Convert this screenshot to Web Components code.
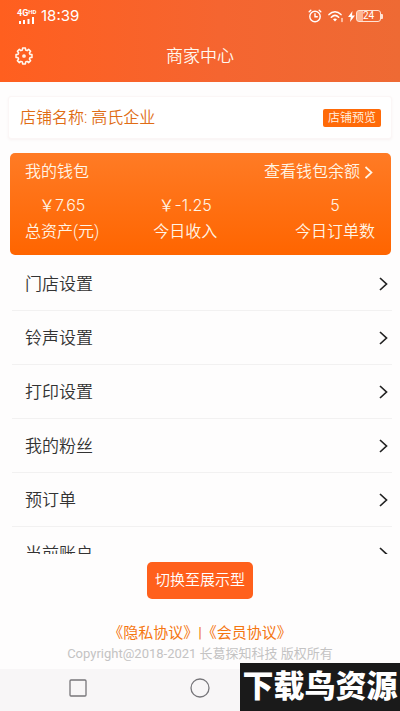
<!DOCTYPE html>
<html lang="zh-CN">
<head>
<meta charset="utf-8">
<meta name="viewport" content="width=device-width, initial-scale=1">
<title>商家中心</title>
<style>
html, body { height: 100%; }
body { margin: 0; background: #fefdfd; font-family: Roboto, "Noto Sans CJK SC", sans-serif; font-weight: 350; color: #333; }
</style>
</head>
<body>
<merchant-page></merchant-page>
<script>
const define = (name, html, setup) => customElements.define(name, class extends HTMLElement {
  constructor() {
    super();
    this.attachShadow({ mode: "open" }).innerHTML = html;
  }
  connectedCallback() { if (setup) setup(this, this.shadowRoot); }
});

define("status-bar", `
<style>
:host { display: flex; align-items: center; height: 32px; padding: 0 17px; color: #fff; }
.time { font-family: Inter, sans-serif; font-size: 15px; line-height: 20px; margin-left: 4px; flex: 1; font-weight: 400; }
.signal { display: flex; flex-direction: column; width: 20px; }
.net { font: 700 9px/8px Roboto, sans-serif; display: flex; }
.net small { font-size: 6px; line-height: 5px; }
.icons { display: flex; align-items: center; }
.wifi { margin-left: 6px; }
.bolt { margin-left: 4px; }
.battery { box-sizing: border-box; width: 25px; height: 12px; border: 1px solid #ffe3d5; border-radius: 3px; margin-left: 1px;
  font: 10px/10px Roboto, sans-serif; text-align: center; background: linear-gradient(90deg, #ffb593 24%, transparent 24%); }
.tip { width: 2px; height: 5px; background: #ffe3d5; border-radius: 0 1px 1px 0; }
</style>
<div class="signal"><span class="net">4G<small>HD</small></span>
<svg width="18" height="7" viewBox="0 0 18 7" fill="#fff"><path d="M2 4h2v3H2zM6 3h2v4H6zM10.500 2h2v5h-2zM15 0h2v7h-2z"/></svg></div>
<span class="time">18:39</span>
<div class="icons">
<svg width="14" height="14" viewBox="0 0 14 14" fill="none" stroke="#fff" stroke-width="1.400" stroke-linecap="round"><circle cx="7" cy="7.500" r="5.200"/><path d="M7 4.800v3h2.300M1.200 2.800l1.600-1.500M12.800 2.800l-1.600-1.500"/></svg>
<svg class="wifi" width="16" height="13" viewBox="0 0 16 13" fill="none" stroke="#fff" stroke-width="1.500" stroke-linecap="round"><path d="M1 4.600C4.500.900 9.500.900 13 4.600M3.300 7.200c2.200-2.200 5.200-2.200 7.400 0"/><path d="M5 9.200c1.200-1 2.800-1 4 0l-2 2.200z" fill="#fff" stroke="none"/><path d="M14 8.500v3" stroke="#ffd4c0"/></svg>
<svg class="bolt" width="7" height="11" viewBox="0 0 7 11" fill="#fff"><path d="M4.500 0L0 6h2.800L2 11l5-6.500H4z"/></svg>
<div class="battery">24</div><div class="tip"></div>
</div>`);

define("page-header", `
<style>
:host { display: block; height: 82px; flex: none; color: #fff8ef; background: linear-gradient(90deg, #ff5f1f, #f56530 55%, #ee6a34); }
.bar { display: grid; grid-template-columns: 48px 1fr 48px; align-items: center; height: 47px; }
h1 { margin: 0; text-align: center; font-size: 17px; line-height: 24px; font-weight: 350; }
button { border: 0; padding: 0; background: none; color: inherit; width: 48px; height: 40px; display: grid; place-items: center; }
</style>
<status-bar></status-bar>
<div class="bar">
<button aria-label="设置"><svg width="18" height="18" viewBox="0 0 18 18" fill="none" stroke="currentColor" stroke-width="1.500" stroke-linejoin="round"></svg></button>
<h1><slot></slot></h1>
</div>`, (host, root) => {
  const parts = [];
  for (let i = 0; i < 8; i++) {
    for (const [offset, radius] of [[-15, 6.2], [-10, 8.1], [10, 8.1], [15, 6.2]]) {
      const a = (i * 45 + offset) * Math.PI / 180;
      parts.push((9 + radius * Math.cos(a)).toFixed(2) + " " + (9 + radius * Math.sin(a)).toFixed(2));
    }
  }
  root.querySelector("button svg").innerHTML = '<path d="M' + parts.join("L") + 'Z"/><circle cx="9" cy="9" r="1.100"/>';
});

define("store-card", `
<style>
:host { display: flex; align-items: center; justify-content: space-between; box-sizing: border-box; height: 43px; margin: 14px 8px 0; padding: 0 10px 0 11px;
  border: 1px solid #fbf6f6; border-radius: 3px; background: #fff; box-shadow: 0 1px 3px #f8f3f3; flex: none; }
.name { color: #e06c14; font-size: 16px; line-height: 24px; }
button { border: 0; border-radius: 2px; background: #ff6a08; color: #fff3e3; font: inherit; font-size: 12px; line-height: 18px; padding: 0 5px; }
</style>
<span class="name"><slot></slot></span><button>店铺预览</button>`);

define("wallet-card", `
<style>
:host { display: block; box-sizing: border-box; height: 102px; margin: 14px 9px 0 10px; padding: 7px 16px 0 15px; flex: none;
  border-radius: 5px; background: linear-gradient(#ff7b25, #ff6500); color: #fff5e6; font-size: 16px; line-height: 24px; }
.top { display: flex; justify-content: space-between; }
.stats { display: grid; grid-template-columns: auto 1fr auto; justify-items: center; margin-top: 9px; }
a { color: inherit; text-decoration: none; display: flex; align-items: center; gap: 4px; margin-right: 2px; }
dl { margin: 0; text-align: center; display: flex; flex-direction: column; gap: 3px; }
.income { margin-right: 24px; }
dt { order: 2; } dd { order: 1; margin: 0; font-family: Inter, "Noto Sans CJK SC", sans-serif; }
</style>
<div class="top"><span>我的钱包</span><a href="#wallet">查看钱包余额<svg width="9" height="13" viewBox="0 0 9 13" fill="none" stroke="currentColor" stroke-width="1.700"><path d="M1.500 1l6 5.500-6 5.500"/></svg></a></div>
<div class="stats">
<dl><dt>总资产(元)</dt><dd>￥7.65</dd></dl>
<dl class="income"><dt>今日收入</dt><dd>￥-1.25</dd></dl>
<dl><dt>今日订单数</dt><dd>5</dd></dl>
</div>`);

define("menu-row", `
<style>
:host { display: block; margin: 0 8px 0 12px; border-bottom: 1px solid #f2f1f1; }
a { display: flex; align-items: center; justify-content: space-between; height: 53px; padding: 0 4px 0 13px; color: #333; text-decoration: none; font-size: 17px; line-height: 24px; }
</style>
<a href="#"><slot></slot><svg width="9" height="14" viewBox="0 0 9 14" fill="none" stroke="#222" stroke-width="1.700"><path d="M1 1l6.500 6L1 13"/></svg></a>`);

define("page-footer", `
<style>
:host { display: flex; flex-direction: column; align-items: center; flex: none; padding: 8px 0 5px; }
button { border: 0; border-radius: 5px; background: #ff601c; color: #fff; font: inherit; font-size: 15px; line-height: 21px; padding: 8px 8px; min-width: 106px; }
nav { margin-top: 23px; color: #f08020; font-size: 15px; line-height: 22px; white-space: nowrap; font-weight: 400; }
a { color: #f57610; text-decoration: none; }
p { margin: 0; color: #c4c3c3; font-size: 13px; line-height: 20px; font-weight: 400; white-space: nowrap; }
</style>
<button>切换至展示型</button>
<nav><a href="#privacy">《隐私协议》</a>|<a href="#member">《会员协议》</a></nav>
<p>Copyright@2018-2021 长葛探知科技 版权所有</p>`);

define("system-nav", `
<style>
:host { display: grid; grid-template-columns: 1fr auto 1fr; align-items: center; justify-items: center; height: 42px; flex: none; background: #f8f6f7; padding: 0 16px; position: relative; }
button { border: 0; padding: 0; background: none; display: grid; place-items: center; width: 32px; height: 32px; margin-bottom: 5px; }
.recent { margin-right: 45px; }
aside { position: absolute; right: 0; bottom: 0; width: 160px; height: 48px; background: #1a1a1a; color: #fff; text-align: center; font-size: 31px; line-height: 48px; font-weight: 900; white-space: nowrap; }
</style>
<button class="recent" aria-label="最近任务"><svg width="20" height="20" viewBox="0 0 20 20" fill="none" stroke="#77767a" stroke-width="1.300"><rect x="2" y="2" width="16" height="16" rx="1"/></svg></button>
<button aria-label="主页"><svg width="20" height="20" viewBox="0 0 20 20" fill="none" stroke="#77767a" stroke-width="1.300"><circle cx="10" cy="10" r="9"/></svg></button>
<aside>下载鸟资源</aside>`);

define("merchant-page", `
<style>
:host { display: flex; flex-direction: column; height: 100%; min-height: 480px; }
main { flex: 1; min-height: 0; display: flex; flex-direction: column; }
.list { flex: 1; min-height: 0; overflow: hidden; padding-top: 2px; }
</style>
<page-header>商家中心</page-header>
<main>
<store-card>店铺名称: 高氏企业</store-card>
<wallet-card></wallet-card>
<div class="list">
<menu-row>门店设置</menu-row><menu-row>铃声设置</menu-row><menu-row>打印设置</menu-row>
<menu-row>我的粉丝</menu-row><menu-row>预订单</menu-row><menu-row>当前账户</menu-row>
</div>
</main>
<page-footer></page-footer>
<system-nav></system-nav>`);
</script>
</body>
</html>
